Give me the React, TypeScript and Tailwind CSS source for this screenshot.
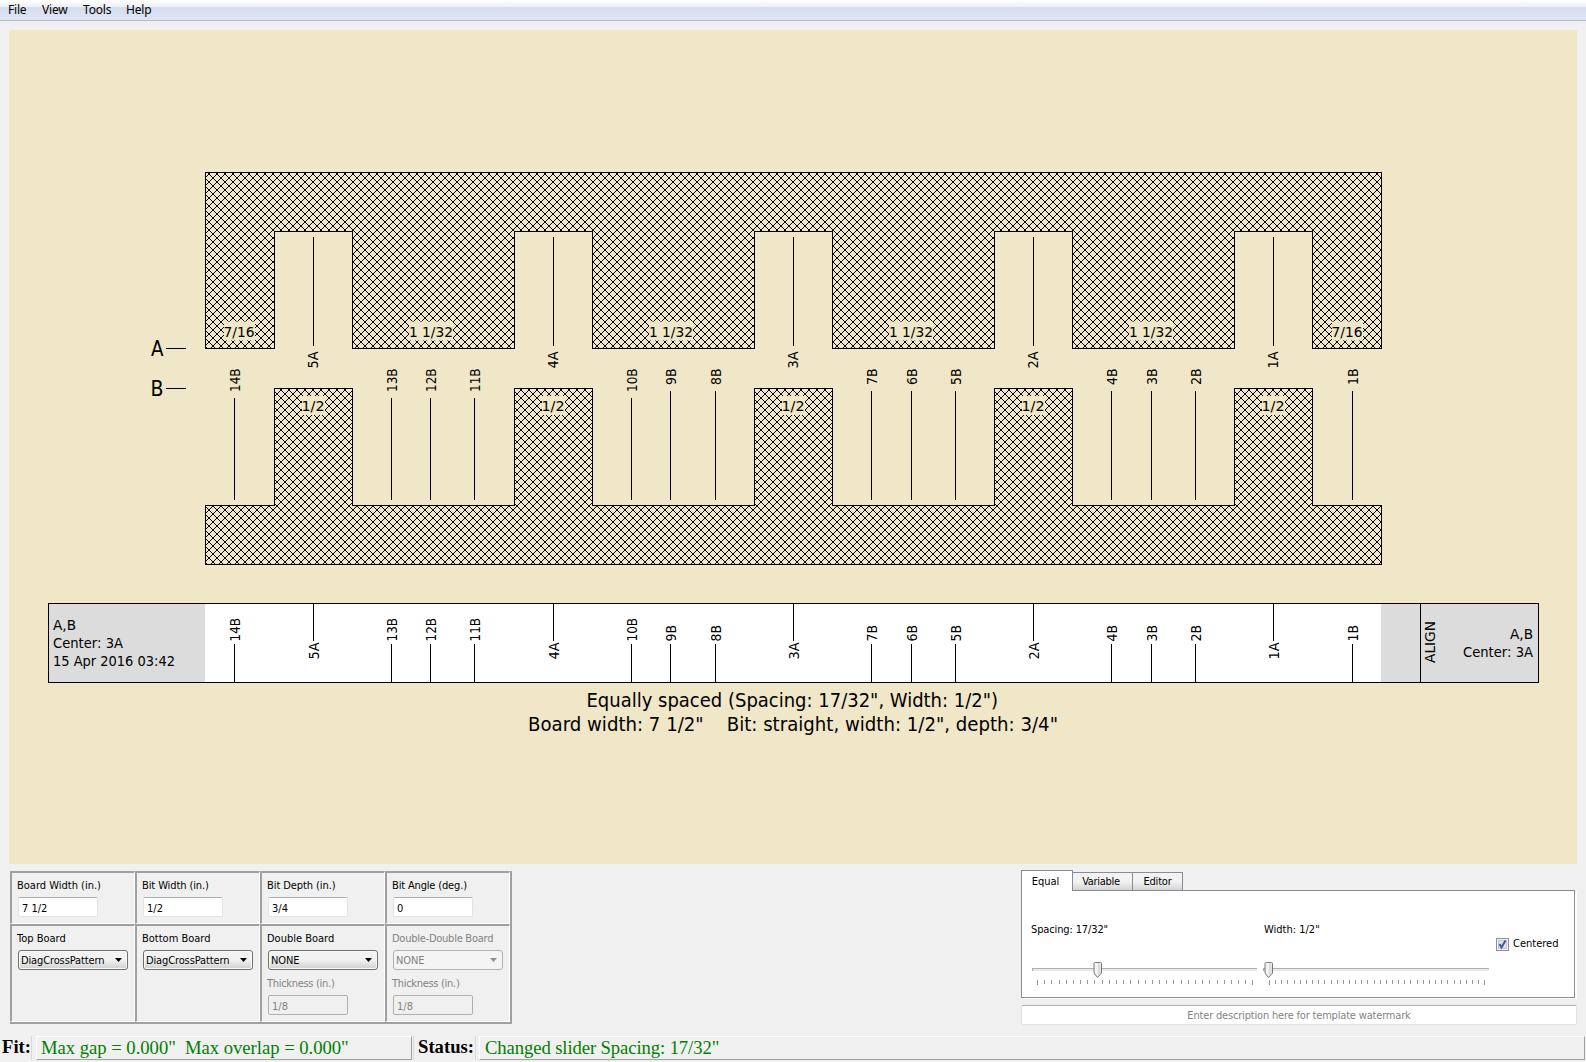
import React from 'react';
import type { ReactNode } from 'react';

const UI = "font-['DejaVu_Sans_Condensed','DejaVu_Sans',sans-serif]";

const HATCH = Array.from({ length: 8 }, (_, r) => `M${r} ${r}h1v1h-1zM${7 - r} ${r}h1v1h-1z`).join('');
const SLOTS = [313, 553, 793, 1033, 1273];
const A_NAMES = ['5A', '4A', '3A', '2A', '1A'];
const B_LINES: [string, number][] = [
  ['14B', 234], ['13B', 391], ['12B', 430], ['11B', 474], ['10B', 631], ['9B', 670], ['8B', 715],
  ['7B', 871], ['6B', 911], ['5B', 955], ['4B', 1111], ['3B', 1151], ['2B', 1195], ['1B', 1352],
];

const topBoard =
  'M205.5 172.5H1381.5V348.5H1312.5' +
  [...SLOTS].reverse().map((c) => `H${c + 39.5}V231.5H${c - 38.5}V348.5`).join('') +
  'H205.5Z';
const bottomBoard =
  'M205.5 564.5V505.5' + SLOTS.map((c) => `H${c - 38.5}V388.5H${c + 39.5}V505.5`).join('') + 'H1381.5V564.5Z';

function T({ x, y, w, size = 14.67, anchor = 'start', children }: {
  x: number; y: number; w: number; size?: number; anchor?: 'start' | 'middle' | 'end'; children: ReactNode;
}) {
  return (
    <text x={x} y={y} fontSize={size} textAnchor={anchor} textLength={w} lengthAdjust="spacingAndGlyphs">
      {children}
    </text>
  );
}

/* Text that reads upwards: (x, y) is the lower end of its baseline. */
function Up({ x, y, w, children }: { x: number; y: number; w: number; children: ReactNode }) {
  return (
    <g transform={`translate(${x} ${y}) rotate(-90)`}>
      <T x={0} y={0} w={w}>{children}</T>
    </g>
  );
}

function Dimension({ cx, y, w, children }: { cx: number; y: number; w: number; children: ReactNode }) {
  return (
    <g>
      <rect x={Math.round(cx - w / 2)} y={y - 15} width={w} height={19} fill="#f0e6c8" />
      <T x={cx} y={y} w={w} anchor="middle">{children}</T>
    </g>
  );
}

function Drawing() {
  return (
    <svg className={`block h-[834px] w-[1568px] ${UI}`} viewBox="9 30 1568 834">
      <defs>
        <pattern id="hatch" x="1" y="6" width="8" height="8" patternUnits="userSpaceOnUse">
          <path d={HATCH} fill="#000" shapeRendering="crispEdges" />
        </pattern>
      </defs>
      <path d={topBoard} fill="url(#hatch)" stroke="#000" shapeRendering="crispEdges" />
      <path d={bottomBoard} fill="url(#hatch)" stroke="#000" shapeRendering="crispEdges" />
      <Dimension cx={239} y={336.5} w={31}>7/16</Dimension>
      {[431, 671, 911, 1151].map((x) => <Dimension key={x} cx={x} y={336.5} w={44}>1 1/32</Dimension>)}
      <Dimension cx={1347} y={336.5} w={31}>7/16</Dimension>
      {SLOTS.map((x) => <Dimension key={x} cx={x} y={411} w={23}>1/2</Dimension>)}
      <T x={151} y={356} w={12.5} size={20.5}>A</T>
      <T x={150.5} y={396} w={13} size={20.5}>B</T>
      <path d="M166 348.5h20M166 388.5h20" stroke="#000" />
      <rect x="48.5" y="603.5" width="1490" height="79" fill="#fff" />
      <rect x="48.5" y="603.5" width="156.5" height="79" fill="#dcdcdc" />
      <rect x="1381" y="603.5" width="157.5" height="79" fill="#dcdcdc" />
      <rect x="48.5" y="603.5" width="1490" height="79" fill="none" stroke="#000" />
      {SLOTS.map((x, i) => (
        <g key={x}>
          <path d={`M${x + 0.5} 237V346M${x + 0.5} 604V641`} stroke="#000" />
          <Up x={x + 5} y={368.5} w={17}>{A_NAMES[i]}</Up>
          <Up x={x + 5.5} y={659.5} w={17}>{A_NAMES[i]}</Up>
        </g>
      ))}
      {B_LINES.map(([name, x]) => {
        const w = name.length === 3 ? 23.5 : 16.5;
        return (
          <g key={name}>
            <path d={`M${x + 0.5} ${name.length === 3 ? 398 : 391}V500M${x + 0.5} 644V682`} stroke="#000" />
            <Up x={x + 5.5} y={368.5 + w} w={w}>{name}</Up>
            <Up x={x + 5.5} y={641.5} w={w}>{name}</Up>
          </g>
        );
      })}
      <path d="M1420.5 604V682" stroke="#000" />
      <Up x={1434.5} y={663} w={42}>ALIGN</Up>
      <T x={53} y={630} w={23}>A,B</T>
      <T x={53} y={648} w={70}>Center: 3A</T>
      <T x={53} y={666} w={122}>15 Apr 2016 03:42</T>
      <T x={1533} y={639} w={23} anchor="end">A,B</T>
      <T x={1533} y={657} w={70} anchor="end">Center: 3A</T>
      <T x={586.5} y={706.5} w={411.5} size={20}>Equally spaced (Spacing: 17/32", Width: 1/2")</T>
      <T x={528} y={730.5} w={530} size={20}>{'Board width: 7 1/2"\u00a0\u00a0\u00a0\u00a0Bit: straight, width: 1/2", depth: 3/4"'}</T>
    </svg>
  );
}

function Cell({ children }: { children: ReactNode }) {
  return (
    <div className="flex flex-col items-start border-t-2 border-r border-b border-l-2 border-t-[#a0a0a0] border-r-white border-b-white border-l-[#a0a0a0] pt-[5px] pl-1.5">
      {children}
    </div>
  );
}

function Label({ off, className = '', children }: { off?: boolean; className?: string; children: ReactNode }) {
  return (
    <div className={`-ml-px h-[19px] whitespace-nowrap leading-4 ${off ? 'text-[#838383]' : 'text-black'} ${className}`}>
      {children}
    </div>
  );
}

function Field({ value, off }: { value: string; off?: boolean }) {
  return (
    <div
      className={`flex h-5 w-20 items-center rounded-[2px] border pt-[3px] pl-[3px] leading-4 ${
        off ? 'border-[#afafaf] bg-[#f0f0f0] text-[#838383]' : 'border-[#e2e3ea] border-t-[#abadb3] bg-white text-black'
      }`}
    >
      {value}
    </div>
  );
}

function Select({ value, off }: { value: string; off?: boolean }) {
  return (
    <div
      className={`flex h-5 w-[110px] items-center justify-between rounded-[3px] border pr-[5px] pl-0.5 leading-4 ${
        off
          ? 'border-[#adb2b5] bg-[#f4f4f4] text-[#838383]'
          : 'border-[#707070] bg-linear-to-b from-[#f2f2f2] from-50% to-[#cfcfcf] to-100% text-black shadow-[inset_0_0_0_1px_#fafafa]'
      }`}
    >
      <span className="pt-px tracking-[-0.13px]">{value}</span>
      <svg className="h-1 w-[7px]" viewBox="0 0 7 4"><path d="M0 0h7L3.5 4z" fill={off ? '#8f8f8f' : '#000'} /></svg>
    </div>
  );
}

function Slider({ width, first, step, count, thumb }: { width: number; first: number; step: number; count: number; thumb: number }) {
  return (
    <svg className="block h-6" width={width} height="24" viewBox={`0 0 ${width} 24`}>
      <rect x="0" y="6" width={width} height="3" fill="#e7eaea" />
      <path d={`M0 6.5H${width}M.5 6v3`} stroke="#aeb0b1" fill="none" />
      {Array.from({ length: count }, (_, i) => (
        <rect key={i} x={Math.round(first + i * step)} y="18" width="1" height={i === 0 || i === count - 1 ? 5 : 4} fill="#9d9b8b" />
      ))}
      <g transform={`translate(${thumb} 0)`}>
        <path d="M2.5.5h5q1 0 1 1v9.5l-4 4.5-3.5-4.5v-9.5q0-1 1.5-1z" fill="#f3f3f3" stroke="#73777a" />
        <path d="M5 1.5h2.5v9L5 13.5z" fill="#dadada" />
      </g>
    </svg>
  );
}

export default function App() {
  return (
    <div className={`flex h-[1062px] w-[1586px] flex-col overflow-hidden bg-[#f0f0f0] text-[11px] text-black ${UI}`}>
      <nav className="flex h-[21px] shrink-0 items-center gap-4 border-b border-[#b6bccc] bg-[linear-gradient(#ffffff_0,#eceff7_7px,#d5dcef_7px,#dfe5f5_20px)] pl-2 font-['Noto_Sans',sans-serif] text-[12px] leading-5 tracking-[-0.2px]">
        <span className="w-[18px]">File</span>
        <span className="w-[25px]">View</span>
        <span className="w-[27px]">Tools</span>
        <span>Help</span>
      </nav>

      <main className="mx-[9px] mt-[9px] h-[834px] shrink-0 bg-[#f0e6c8]">
        <Drawing />
      </main>

      <section className="flex h-[167px] shrink-0 justify-between pt-1.5 pr-[9px] pl-[10px]">
        <div className="mt-px grid h-[153px] w-[502px] grid-cols-[repeat(4,125px)] grid-rows-[53px_98px] border-r-2 border-b-2 border-[#a0a0a0]">
          <Cell><Label>Board Width (in.)</Label><Field value="7 1/2" /></Cell>
          <Cell><Label className="tracking-[-0.1px]">Bit Width (in.)</Label><Field value="1/2" /></Cell>
          <Cell><Label className="tracking-[-0.08px]">Bit Depth (in.)</Label><Field value="3/4" /></Cell>
          <Cell><Label className="tracking-[-0.16px]">Bit Angle (deg.)</Label><Field value="0" /></Cell>
          <Cell><Label>Top Board</Label><Select value="DiagCrossPattern" /></Cell>
          <Cell><Label>Bottom Board</Label><Select value="DiagCrossPattern" /></Cell>
          <Cell>
            <Label>Double Board</Label><Select value="NONE" />
            <div className="h-1.5" /><Label off className="tracking-[-0.3px]">Thickness (in.)</Label><Field value="1/8" off />
          </Cell>
          <Cell>
            <Label off className="tracking-[-0.25px]">Double-Double Board</Label><Select value="NONE" off />
            <div className="h-1.5" /><Label off className="tracking-[-0.3px]">Thickness (in.)</Label><Field value="1/8" off />
          </Cell>
        </div>

        <div className="flex w-[556px] flex-col">
          <div className="z-10 -mb-px flex h-[21px] items-end">
            <div className="flex h-[21px] w-[52px] items-center justify-center border border-b-0 border-[#898c95] bg-white pt-0.5 pr-[3px] leading-4">Equal</div>
            <div className="-ml-px flex h-[19px] w-[61px] items-center justify-center border border-[#898c95] bg-linear-to-b from-[#f2f2f2] from-50% to-[#d4d4d4] pt-px pr-[3px] leading-4 tracking-[-0.3px]">Variable</div>
            <div className="-ml-px flex h-[19px] w-[51px] items-center justify-center border border-[#898c95] bg-linear-to-b from-[#f2f2f2] from-50% to-[#d4d4d4] pt-px leading-4 tracking-[-0.2px]">Editor</div>
          </div>
          <div className="flex h-[108px] w-[554px] border border-[#898c95] bg-white pl-[10px] shadow-[2px_1px_0_#fff]">
            <div className="w-[231px] pt-[31px]">
              <Label className="tracking-[-0.13px]">Spacing: 17/32"</Label>
              <div className="h-[21px]" />
              <Slider width={225} first={5} step={7.18} count={31} thumb={61} />
            </div>
            <div className="w-[233px] pt-[31px]">
              <Label className="pl-0.5">Width: 1/2"</Label>
              <div className="h-[21px]" />
              <Slider width={226} first={6} step={6.15} count={36} thumb={1} />
            </div>
            <div className="mt-[45px] flex h-4 items-center gap-1">
              <svg className="h-[13px] w-[13px]" viewBox="0 0 13 13">
                <rect x=".5" y=".5" width="12" height="12" fill="#f4f4f4" stroke="#8e8f8f" />
                <rect x="2.5" y="2.5" width="8" height="8" fill="#dfe3ea" stroke="#c3c8d0" />
                <path d="M3.5 6l2 3.5L9.5 2.5" fill="none" stroke="#4058a0" strokeWidth="2" />
              </svg>
              <span className="leading-4">Centered</span>
            </div>
          </div>
          <div className="mt-[7px] flex h-5 items-center justify-center rounded-[2px] border border-[#e2e3ea] border-t-[#abadb3] bg-white pt-[3px] tracking-[-0.18px] text-[#838383]">
            Enter description here for template watermark
          </div>
        </div>
      </section>

      <footer className="flex h-[29px] shrink-0 items-start pt-[5px] font-['Liberation_Serif',serif] text-[18.67px] leading-[21px]">
        <div className="h-6 w-8 border-r border-[#d8d8d8] pl-0.5 font-bold leading-[22px]">Fit:</div>
        <div className="ml-1 h-6 w-[376px] border border-t-white border-r-[#a0a0a0] border-b-[#a0a0a0] border-l-white pl-1 tracking-[-0.03px] whitespace-pre text-[#008000]">{'Max gap = 0.000"  Max overlap = 0.000"'}</div>
        <div className="ml-px h-6 w-[63px] border-x border-[#d8d8d8] pl-1 font-bold leading-[22px]">Status:</div>
        <div className="ml-[3px] h-6 w-[1106px] border border-t-white border-r-[#a0a0a0] border-b-[#a0a0a0] border-l-white pl-[5px] tracking-[-0.1px] text-[#008000]">Changed slider Spacing: 17/32"</div>
      </footer>
    </div>
  );
}
